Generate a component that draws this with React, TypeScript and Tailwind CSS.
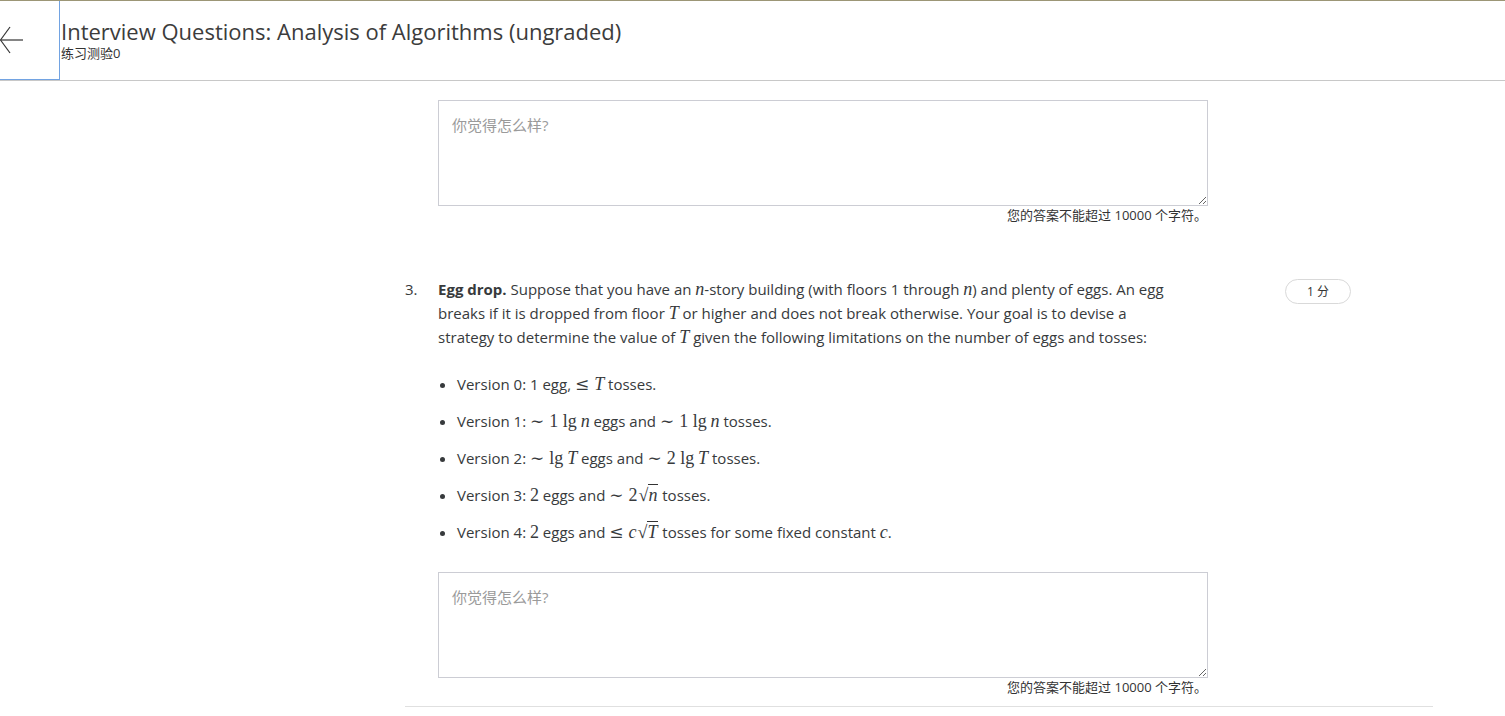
import React from "react";

const SANS = "font-['Open_Sans','Noto_Sans_CJK_SC',sans-serif]";
const SERIF = "font-['Liberation_Serif','DejaVu_Serif',serif] text-[18px] leading-[0]";

// math italic variable
function M({ children }: { children: React.ReactNode }) {
    return <span className={`${SERIF} italic`}>{children}</span>;
}

// upright math (numbers, lg)
function Up({ children }: { children: React.ReactNode }) {
    return <span className={SERIF}>{children}</span>;
}

// relation symbol, spaced like katex
function Rel({ children }: { children: React.ReactNode }) {
    return <span className="font-['DejaVu_Serif',serif] text-[17px] leading-[0] mr-[5px]">{children}</span>;
}

function Sqrt({ children }: { children: React.ReactNode }) {
    return (
        <span className={SERIF}>
            <span className="ml-[1px]">√</span>
            <span className="border-t border-[#333] italic pr-[1px] leading-[18px]">{children}</span>
        </span>
    );
}

function AnswerBox() {
    return (
        <div className="flex flex-col items-end">
            <textarea
                placeholder="你觉得怎么样?"
                className={`w-[770px] h-[106px] border border-[#cccdd4] px-[13px] py-[14px] text-[15px] leading-[20px] text-[#333] placeholder:text-[#9a9a9a] outline-none ${SANS}`}
            />
            <div className="text-[13px] leading-[18px] text-[#333] pr-[1px]">您的答案不能超过 10000 个字符。</div>
        </div>
    );
}

export default function App() {
    return (
        <div className={`min-h-screen bg-white text-[#373a3c] ${SANS}`}>
            <header className="flex h-[81px] border-t border-[#9c9676] border-b border-b-[#c8c8c8] bg-white">
                <button className="w-[60px] h-[79px] border-r border-b border-r-[#72a3e2] border-b-[#72a3e2] flex items-center justify-start shrink-0">
                    <svg width="24" height="28" viewBox="0 0 24 28" fill="none" stroke="#333" strokeWidth="1.2">
                        <path d="M0.5 14 H23" />
                        <path d="M0.5 14 L10 1" />
                        <path d="M0.5 14 L10 27" />
                    </svg>
                </button>
                <div className="flex flex-col pt-[15px] pl-[1px]">
                    <h1 className="text-[22px] leading-[30px] text-[#3c3c3c] font-normal">Interview Questions: Analysis of Algorithms (ungraded)</h1>
                    <div className="text-[13px] leading-[14px] text-[#333]">练习测验0</div>
                </div>
            </header>

            <main className="ml-[405px] w-[1028px] pt-[19px]">
                <div className="pl-[33px] w-[803px]">
                    <AnswerBox />
                </div>

                <div className="flex mt-[52px]">
                    <div className="w-[33px] text-[15px] leading-[24px] pt-[1px]">3.</div>
                    <div className="w-[770px] text-[15px] leading-[24px]">
                        <p className="pr-[24px] pt-[1px]">
                            <b className="font-bold">Egg drop.</b> Suppose that you have an <M>n</M>-story building (with floors 1 through <M>n</M>) and plenty of eggs. An egg breaks if it is dropped from floor <M>T</M> or higher and does not break otherwise. Your goal is to devise a strategy to determine the value of <M>T</M> given the following limitations on the number of eggs and tosses:
                        </p>
                        <ul className="list-disc pl-[19px] mt-[23px] flex flex-col gap-[13px]">
                            <li>Version 0: 1 egg, <Rel>≤</Rel><M>T</M> tosses.</li>
                            <li>Version 1: <Rel>∼</Rel><Up>1 lg</Up> <M>n</M> eggs and <Rel>∼</Rel><Up>1 lg</Up> <M>n</M> tosses.</li>
                            <li>Version 2: <Rel>∼</Rel><Up>lg</Up> <M>T</M> eggs and <Rel>∼</Rel><Up>2 lg</Up> <M>T</M> tosses.</li>
                            <li>Version 3: <Up>2</Up> eggs and <Rel>∼</Rel><Up>2</Up><Sqrt>n</Sqrt> tosses.</li>
                            <li>Version 4: <Up>2</Up> eggs and <Rel>≤</Rel><M>c</M><Sqrt>T</Sqrt> tosses for some fixed constant <M>c</M>.</li>
                        </ul>
                        <div className="mt-[28px]">
                            <AnswerBox />
                        </div>
                    </div>
                    <div className="ml-[77px] mt-[3px]">
                        <div className="w-[66px] h-[25px] rounded-full border border-[#d9d9d9] flex items-center justify-center text-[12px] text-[#333]">1 分</div>
                    </div>
                </div>

                <div className="mt-[10px] border-t border-[#e0e0e0]" />
            </main>
        </div>
    );
}
